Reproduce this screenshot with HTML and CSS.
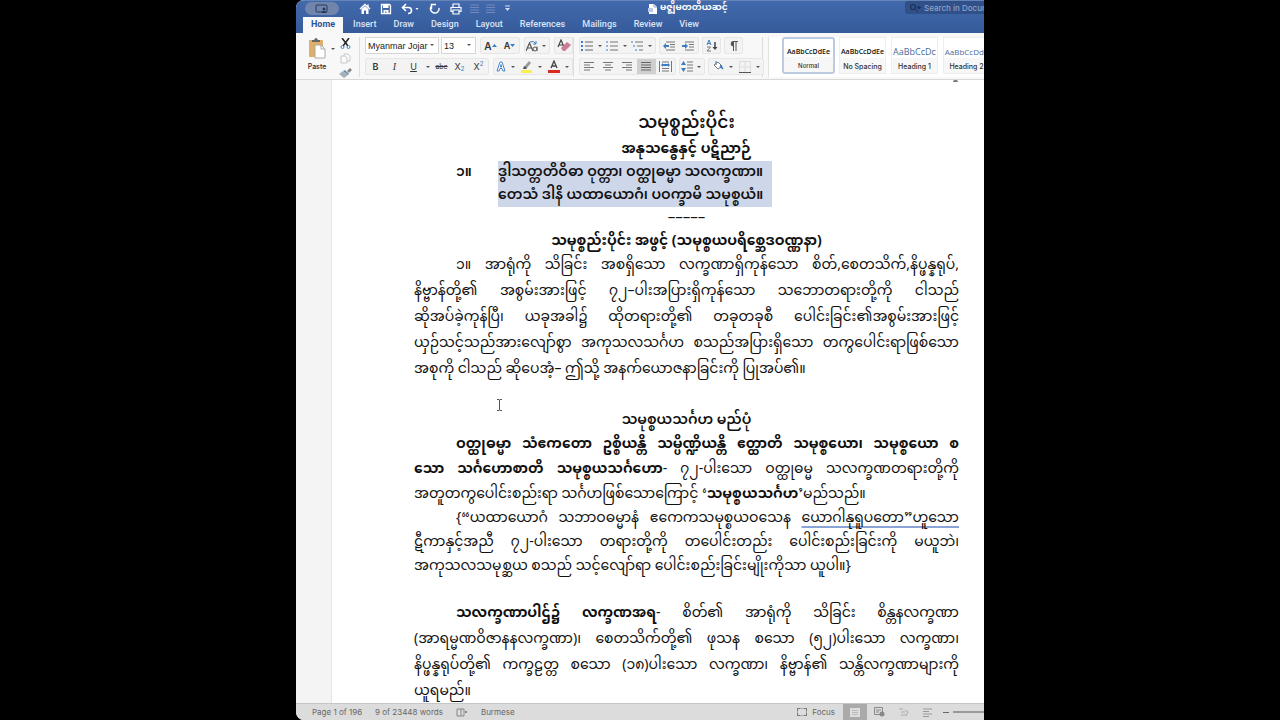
FILE: index.html
```html
<!DOCTYPE html>
<html lang="my">
<head>
<meta charset="utf-8">
<title>မဇ္ဈိမတတိယဆင့်</title>
<link rel="stylesheet" href="styles.css">
</head>
<body>
<div class="window">
  <header class="titlebar" lang="en">
    <div class="quick">
      <button class="pill" aria-label="Presenter"><svg width="14" height="10" viewBox="0 0 14 10"><rect x="1" y="1" width="11" height="7" rx="1" fill="none" stroke="#26375a"/><circle cx="9" cy="5" r="1.5" fill="#26375a"/><path d="M6 9q3-4 6 0z" fill="#26375a"/></svg></button>
      <button class="q" aria-label="Home"><svg width="12" height="12" viewBox="0 0 12 12"><path d="M1 6 6 1.500 11 6M9 1.500V4" fill="none" stroke="#fff" stroke-width="1.400"/><path d="M2.500 6 6 3l3.500 3v5H7V7.500H5V11H2.500z" fill="#fff"/></svg></button>
      <button class="q" aria-label="Save"><svg width="12" height="12" viewBox="0 0 12 12"><path d="M1.500 1.500h8l1 1v8h-9z" fill="none" stroke="#fff" stroke-width="1.300"/><path d="M3 2h5.500v3H3zM3.500 7h5v4H6.500V8.500H5V11H3.500z" fill="#fff"/></svg></button>
      <button class="q undo" aria-label="Undo"><svg width="18" height="12" viewBox="0 0 18 12"><path d="M5 1 1.500 4.500 5 8M2 4.500h5.500q3 0 3 3T7 10.500" fill="none" stroke="#fff" stroke-width="1.600"/><path d="M14.500 5h3L16 7z" fill="#fff"/></svg></button>
      <button class="q" aria-label="Redo"><svg width="12" height="12" viewBox="0 0 12 12"><path d="M9.500 3A4.300 4.300 0 1 1 2 5M5 1.500h4.500V6" fill="none" stroke="#fff" stroke-width="1.500" transform="matrix(-1 0 0 1 12 0)"/></svg></button>
      <button class="q" aria-label="Print"><svg width="12" height="12" viewBox="0 0 12 12"><path d="M3 4.500V1h6v3.500M3 8.500H1v-4h10v4H9M3 7h6v4H3z" fill="none" stroke="#fff" stroke-width="1.200"/></svg></button>
      <button class="q small" aria-label="Outline"><svg width="9" height="10" viewBox="0 0 9 10"><path d="M0 1h9M0 3.500h9M0 6h9M0 8.500h9" stroke="#7189bb"/></svg></button>
      <button class="q small" aria-label="List"><svg width="9" height="10" viewBox="0 0 9 10"><path d="M0 1h9M0 3.500h9M0 6h9M0 8.500h9" stroke="#7189bb"/></svg></button>
      <button class="q more" aria-label="Customize"><svg width="7" height="7" viewBox="0 0 7 7"><path d="M1 1h5" stroke="#d5ddef"/><path d="M1 3h5L3.500 6z" fill="#d5ddef"/></svg></button>
    </div>
    <div class="doc-title"><svg width="9" height="10" viewBox="0 0 9 10"><path d="M1 0h5l3 3v7H1z" fill="#fff"/><path d="M6 0v3h3" fill="none" stroke="#8ba4d4"/><path d="M0 4h5v4H0z" fill="#b9caeb"/></svg><span lang="my">မဇ္ဈိမတတိယဆင့်</span></div>
    <label class="search"><svg width="12" height="10" viewBox="0 0 12 10"><circle cx="4" cy="4" r="2.500" fill="none" stroke="#1d3158" stroke-width="1.200"/><path d="m6 6 3 3M8.500 4h3L10 6z" stroke="#1d3158" fill="#1d3158"/></svg><input type="text" placeholder="Search in Document" aria-label="Search in Document"></label>
    <nav class="tabs">
      <button class="tab active">Home</button><button class="tab">Insert</button><button class="tab">Draw</button><button class="tab">Design</button><button class="tab">Layout</button><button class="tab">References</button><button class="tab">Mailings</button><button class="tab">Review</button><button class="tab">View</button>
    </nav>
  </header>

  <section class="ribbon" lang="en">
    <div class="clip">
      <button class="paste"><svg width="17" height="22" viewBox="0 0 17 22"><rect x="0" y="3" width="14" height="17" rx="1" fill="#dfae69"/><path d="M3 5V3h2q2-4 4 0h2v2z" fill="#666"/><path d="M6 8h6l4 4v9H6z" fill="#fff" stroke="#aaa"/><path d="M12 8v4h4" fill="none" stroke="#aaa"/></svg><span>Paste</span></button>
      <i class="arrow"></i>
      <div class="clip-tools">
        <button aria-label="Cut"><svg width="12" height="11" viewBox="0 0 12 11"><path d="m2 0 6 8M9 0 3 8" stroke="#222" stroke-width="1.500"/><circle cx="2.500" cy="9" r="1.500" fill="none" stroke="#4c80bb"/><circle cx="8.500" cy="9" r="1.500" fill="none" stroke="#4c80bb"/></svg></button>
        <button aria-label="Copy"><svg width="11" height="11" viewBox="0 0 11 11"><path d="M1 3h4l2 2v5H1zM4 3V1h4l2 2v5H7" fill="#fafafa" stroke="#c8c8c8"/></svg></button>
        <button aria-label="Format Painter"><svg width="13" height="10" viewBox="0 0 13 10"><path d="m8 3 3-3 2 2-3 3z" fill="#888"/><path d="m6 2 4 4-1 1-5-4z" fill="#5b8db8"/><path d="m4 3 5 4-4 3-5-4z" fill="#a8afb5"/></svg></button>
      </div>
    </div>

    <div class="tools">
      <div class="row">
        <div class="pair"><span class="combo font"><select aria-label="Font"><option>Myanmar Jojar</option></select></span><span class="combo size"><select aria-label="Font size"><option>13</option></select></span></div>
        <div class="group"><button class="b19"><b class="big">A</b><svg width="5" height="4" viewBox="0 0 5 4"><path d="M0 3 2.500 0 5 3z" fill="#3d7cc0"/></svg></button><button class="b19"><b>A</b><svg width="5" height="4" viewBox="0 0 5 4"><path d="M0 0h5L2.500 3z" fill="#3d7cc0"/></svg></button></div>
        <div class="group"><button class="b13" aria-label="Change case"><svg width="12" height="12" viewBox="0 0 12 12"><path d="M0 11 3.500 3 7 11M1 8h5" fill="none" stroke="#555" stroke-width="1.200"/><circle cx="9" cy="9" r="2" fill="none" stroke="#555"/><path d="M11 6.500V11" stroke="#555"/><path d="M4 2q4-2 6 2M10 1v3H7" fill="none" stroke="#3d7cc0"/></svg></button><i class="arrow"></i></div>
        <div class="group"><button class="b16" aria-label="Clear formatting"><svg width="14" height="13" viewBox="0 0 14 13"><path d="M1 8 4 1l3 7M2 6h4" fill="none" stroke="#444" stroke-width="1.200"/><path d="m4 9 6-6 4 3-6 6H6z" fill="#cc7d94"/></svg></button></div>
      </div>
      <div class="row">
        <div class="group"><button class="b19"><b>B</b></button><button class="b19 it">I</button><button class="b19"><u>U</u></button><i class="arrow"></i><button class="b16"><s>abc</s></button><button class="b19">X<sub>2</sub></button><button class="b19">X<sup>2</sup></button></div>
        <div class="group"><button class="b13" aria-label="Text effects"><svg width="11" height="11" viewBox="0 0 11 11"><path d="m1 10 3-9h2l3 9H7L6 7.500H4L3 10zM5 3.500 4.500 6h1.200z" fill="#fff" stroke="#4a86c8"/></svg></button><i class="arrow"></i><button class="b16" aria-label="Highlight"><svg width="12" height="13" viewBox="0 0 12 13"><path d="m3 7 5-6 2 2-5 6z" fill="#999"/><path d="m2 9 1-3 3 2-1 1z" fill="#555"/><path d="M0 10h11v3H0z" fill="#f7f14a"/></svg></button><i class="arrow"></i><button class="b16" aria-label="Font color"><svg width="12" height="13" viewBox="0 0 12 13"><path d="m3 8 3-7 3 7M4 6h4" fill="none" stroke="#444" stroke-width="1.300"/><path d="M0 10h12v3H0z" fill="#dc2a22"/></svg></button><i class="arrow"></i></div>
      </div>
    </div>

    <div class="tools para">
      <div class="row near">
        <div class="group"><button class="b15" aria-label="Bullets"><svg width="13" height="10" viewBox="0 0 13 10"><path d="M4 1h8M4 5h8M4 9h8" stroke="#666"/><path d="M0 1h2M0 5h2M0 9h2" stroke="#3d7cc0" stroke-width="2"/></svg></button><i class="arrow"></i><button class="b15" aria-label="Numbering"><svg width="13" height="10" viewBox="0 0 13 10"><path d="M4 1h8M4 5h8M4 9h8" stroke="#777"/><path d="M1 0v2M1 4v2M1 8v2" stroke="#3d7cc0"/></svg></button><i class="arrow"></i><button class="b15" aria-label="Multilevel list"><svg width="13" height="10" viewBox="0 0 13 10"><path d="M4 1h8M6 5h6M8 9h4" stroke="#777"/><path d="M0 1h2M3 4v2M5 8v2" stroke="#3d7cc0"/></svg></button><i class="arrow"></i></div>
        <div class="group"><button class="b19" aria-label="Decrease indent"><svg width="13" height="10" viewBox="0 0 13 10"><path d="M3 1h9M7 3.500h5M7 6h5M3 9h9" stroke="#777"/><path d="m0 5 3-3v2h3v2H3v2z" fill="#3d7cc0"/></svg></button><button class="b19" aria-label="Increase indent"><svg width="13" height="10" viewBox="0 0 13 10"><path d="M3 1h9M7 3.500h5M7 6h5M3 9h9" stroke="#777"/><path d="M6 5 3 2v2H0v2h3v2z" fill="#3d7cc0"/></svg></button></div>
        <div class="group"><button class="b16" aria-label="Sort"><svg width="12" height="12" viewBox="0 0 12 12"><path d="m1 5 2-5 2 5M1.500 3.500h3" fill="none" stroke="#3d7cc0"/><path d="M1 7h3.500L1 11h4" fill="none" stroke="#777"/><path d="M9 2v6" stroke="#444" stroke-width="1.500"/><path d="M6.500 7h5L9 10z" fill="#444"/></svg></button></div>
        <div class="group"><button class="b16" aria-label="Show marks"><svg width="9" height="10" viewBox="0 0 9 10"><path d="M4 .500h5M4.500 0v10M7 0v10" stroke="#555"/><path d="M4.500 0a2.700 2.700 0 0 0 0 5.500z" fill="#555"/></svg></button></div>
      </div>
      <div class="row near">
        <div class="group"><button class="b19" aria-label="Align left"><svg width="11" height="9" viewBox="0 0 11 9"><path d="M0 .500h10M0 3h6M0 5.500h10M0 8h6" stroke="#777"/></svg></button><button class="b19" aria-label="Center"><svg width="11" height="9" viewBox="0 0 11 9"><path d="M0 .500h10M2 3h6M0 5.500h10M2 8h6" stroke="#777"/></svg></button><button class="b19" aria-label="Align right"><svg width="11" height="9" viewBox="0 0 11 9"><path d="M0 .500h10M4 3h6M0 5.500h10M4 8h6" stroke="#777"/></svg></button><button class="b19 pressed" aria-label="Justify"><svg width="11" height="9" viewBox="0 0 11 9"><path d="M0 .500h10M0 3h10M0 5.500h10M0 8h10" stroke="#666"/></svg></button><button class="b19" aria-label="Distribute"><svg width="13" height="11" viewBox="0 0 13 11"><path d="M.500 0v11M12.500 0v11M3 1h7M3 10h7M3 7.500h7" stroke="#777"/><path d="m2 4 2-2v1h5V2l2 2-2 2V5H4v1z" fill="#3d7cc0"/></svg></button></div>
        <div class="group"><button class="b13" aria-label="Line spacing"><svg width="13" height="11" viewBox="0 0 13 11"><path d="M6 1h6M6 4h6M6 7h6M6 10h6" stroke="#777"/><path d="m0 4 2.500-4L5 4zM0 7h5l-2.500 4z" fill="#3d7cc0"/></svg></button><i class="arrow"></i></div>
        <div class="group"><button class="b16" aria-label="Shading"><svg width="12" height="12" viewBox="0 0 12 12"><path d="m2 4 4-3 4 4-4 3z" fill="#fff" stroke="#777"/><path d="M4 0v4M9 4l2 4-3-2z" stroke="#3d7cc0" fill="#3d7cc0"/></svg></button><i class="arrow"></i><button class="b16" aria-label="Borders"><svg width="12" height="12" viewBox="0 0 12 12"><path d="M.500 0v11M11.500 0v11M0 .500h12M6 0v11M0 6h12" stroke="#ddd" fill="none"/><path d="M0 11.500h12" stroke="#555"/></svg></button><i class="arrow"></i></div>
      </div>
    </div>

    <div class="styles">
      <button class="card selected"><span class="sample">AaBbCcDdEe</span><span class="name">Normal</span></button>
      <button class="card"><span class="sample">AaBbCcDdEe</span><span class="name">No Spacing</span></button>
      <button class="card"><span class="sample h1">AaBbCcDc</span><span class="name">Heading 1</span></button>
      <button class="card"><span class="sample h2">AaBbCcDdE</span><span class="name">Heading 2</span></button>
    </div>
  </section>

  <main class="canvas">
    <article class="page">
      <span class="fold"></span>
      <h1>သမုစ္စည်းပိုင်း</h1>
      <h2>အနုသန္ဓေနှင့် ပဋိညာဉ်</h2>
      <div class="verse">
        <span class="num">၁။</span>
        <div class="lines"><mark>ဒွါသတ္တတိဝိဓာ ဝုတ္တာ၊ ဝတ္ထုဓမ္မာ သလက္ခဏာ။</mark><mark>တေသံ ဒါနိ ယထာယောဂံ၊ ပဝက္ခာမိ သမုစ္စယံ။</mark></div>
      </div>
      <div class="dashes">–––––</div>
      <h2>သမုစ္စည်းပိုင်း အဖွင့် (သမုစ္စယပရိစ္ဆေဒဝဏ္ဏနာ)</h2>
      <p class="loose">
        <span class="ln first">၁။ အာရုံကို သိခြင်း အစရှိသော လက္ခဏာရှိကုန်သော စိတ်,စေတသိက်,နိပ္ဖန္နရုပ်,</span>
        <span class="ln">နိဗ္ဗာန်တို့၏ အစွမ်းအားဖြင့် ၇၂–ပါးအပြားရှိကုန်သော သဘောတရားတို့ကို ငါသည်</span>
        <span class="ln">ဆိုအပ်ခဲ့ကုန်ပြီ၊ ယခုအခါ၌ ထိုတရားတို့၏ တခုတခုစီ ပေါင်းခြင်း၏အစွမ်းအားဖြင့်</span>
        <span class="ln">ယှဉ်သင့်သည်အားလျော်စွာ အကုသလသင်္ဂဟ စသည်အပြားရှိသော တကွပေါင်းရာဖြစ်သော</span>
        <span class="ln last">အစုကို ငါသည် ဆိုပေအံ့– ဤသို့ အနက်ယောဇနာခြင်းကို ပြုအပ်၏။</span>
      </p>
      <h3>သမုစ္စယသင်္ဂဟ မည်ပုံ</h3>
      <p>
        <span class="ln first"><b>ဝတ္ထုဓမ္မာ သံဧကတော ဥစ္စိယန္တိ သမ္ပိဏ္ဍိယန္တိ ဧတ္ထာတိ သမုစ္စယော၊ သမုစ္စယော စ</b></span>
        <span class="ln"><b>သော သင်္ဂဟောစာတိ သမုစ္စယသင်္ဂဟော</b>- ၇၂-ပါးသော ဝတ္ထုဓမ္မ သလက္ခဏတရားတို့ကို</span>
        <span class="ln last">အတူတကွပေါင်းစည်းရာ သင်္ဂဟဖြစ်သောကြောင့် ‘<b>သမုစ္စယသင်္ဂဟ</b>’မည်သည်။</span>
      </p>
      <p class="tight">
        <span class="ln first">{“ယထာယောဂံ သဘာဝဓမ္မာနံ ဧကေကသမုစ္စယဝသေန <span class="gram">ယောဂါနုရူပတော”ဟူသော</span></span>
        <span class="ln">ဋီကာနှင့်အညီ ၇၂-ပါးသော တရားတို့ကို တပေါင်းတည်း ပေါင်းစည်းခြင်းကို မယူဘဲ၊</span>
        <span class="ln last">အကုသလသမုစ္ဆယ စသည် သင့်လျော်ရာ ပေါင်းစည်းခြင်းမျိုးကိုသာ ယူပါ။}</span>
      </p>
      <p class="loose">
        <span class="ln first"><b>သလက္ခဏာပါဌ်၌ လက္ခဏအရ</b>- စိတ်၏ အာရုံကို သိခြင်း စိန္တနလက္ခဏာ</span>
        <span class="ln">(အာရမ္မဏဝိဇာနနလက္ခဏာ)၊ စေတသိက်တို့၏ ဖုသန စသော (၅၂)ပါးသော လက္ခဏာ၊</span>
        <span class="ln">နိပ္ဖန္နရုပ်တို့၏ ကက္ခဠတ္တ စသော (၁၈)ပါးသော လက္ခဏာ၊ နိဗ္ဗာန်၏ သန္တိလက္ခဏာများကို</span>
        <span class="ln last">ယူရမည်။</span>
      </p>
      <svg class="ibeam" width="7" height="12" viewBox="0 0 7 12"><path d="M1 .500h2l.500 1 .500-1h2M3.500 1v10M1 11.500h2l.500-1 .500 1h2" fill="none" stroke="#555"/></svg>
    </article>
  </main>

  <footer class="status" lang="en">
    <span>Page 1 of 196</span><span>9 of 23448 words</span>
    <svg width="12" height="9" viewBox="0 0 12 9"><path d="M1 1h4v7H1zM5 1h3v7H5M9 3l2 2M11 3 9 5" fill="none" stroke="#888"/></svg>
    <span>Burmese</span>
    <div class="views">
      <button class="focus"><svg width="10" height="8" viewBox="0 0 10 8"><path d="M.500.500h9v7h-9z" fill="none" stroke="#aaa"/><path d="M.500 3V.500H3M7 .500h2.500V3M9.500 5v2.500H7M3 7.500H.500V5" fill="none" stroke="#777"/></svg>Focus</button>
      <button class="view on" aria-label="Print layout"><svg width="10" height="9" viewBox="0 0 10 9"><path d="M0 0h10v9H0z" fill="#ddd"/><path d="M2 2.500h6M2 4.500h6M2 6.500h6" stroke="#bbb"/></svg></button>
      <button class="view" aria-label="Web layout"><svg width="11" height="10" viewBox="0 0 11 10"><path d="M.500.500h8v7h-8zM2 3h5M2 5h3" fill="none" stroke="#888"/><circle cx="8" cy="7" r="2.500" fill="#888"/></svg></button>
      <button class="view" aria-label="Outline"><svg width="11" height="9" viewBox="0 0 11 9"><path d="M1 1h4M3 4h4M3 7h5M7 2l3 2-2 4" fill="none" stroke="#aaa"/></svg></button>
      <button class="view" aria-label="Draft"><svg width="9" height="9" viewBox="0 0 9 9"><path d="M0 1h9M0 3.500h6M0 6h9M0 8.500h6" stroke="#999"/></svg></button>
      <span class="minus"></span><span class="track"></span>
    </div>
  </footer>
</div>
</body>
</html>
```
FILE: styles.css
```css
* { box-sizing: border-box; }
body { margin: 0; background: #000; font-family: Inter, "Liberation Sans", sans-serif; }
button, input, select { font: inherit; color: inherit; border: 0; padding: 0; background: none; }
button { display: flex; align-items: center; justify-content: center; flex: none; }
svg { flex: none; display: block; }

.window { display: flex; flex-direction: column; height: 100vh; margin: 0 23.125%; overflow: hidden; border-radius: 8px 0 0 8px; background: #fff; }

.titlebar { display: grid; grid-template-columns: 352px 1fr 79px; flex: none; background: linear-gradient(#4169ab, #365b9b); color: #fff; border-top: 1px solid #6484b8; }
.quick { display: flex; align-items: center; height: 15px; padding-left: 9px; }
.pill { width: 34px; height: 13px; margin-right: 15px; border-radius: 7px; background: #7185ac; }
.q { width: 21px; }
.q.undo { width: 28px; }
.q.small { width: 16px; }
.q.more { width: 18px; }
.doc-title { display: flex; align-items: center; gap: 3px; font: 700 9px/15px "Noto Sans Myanmar", "Noto Sans", sans-serif; white-space: nowrap; height: 15px; }
.search { display: flex; align-items: center; gap: 3px; height: 13px; padding-left: 4px; border-radius: 3px 0 0 3px; background: #2f5088; font-size: 8px; font-weight: 500; overflow: hidden; }
.search input { flex: 1; min-width: 80px; }
.search input::placeholder { color: #8fa3c9; opacity: 1; }
.tabs { grid-column: 1 / -1; display: flex; gap: 1px; padding: 1px 7px 0; height: 17px; font: 500 9px Roboto, "Liberation Sans", sans-serif; }
.tab { padding: 0 8px 2px; color: #dbe4f4; }
.tab.active { background: #f8f8f8; color: #2f5597; font-weight: 700; margin-right: 1px; }

.ribbon { display: flex; flex: none; height: 47px; padding-top: 4px; background: #f8f8f8; border-bottom: 1px solid #d8d8d8; color: #333; overflow: hidden; }
.clip { display: flex; flex: none; width: 64px; padding-left: 9px; border-right: 1px solid #ddd; height: 40px; }
.paste { flex-direction: column; justify-content: flex-start; gap: 3px; width: 24px; font-size: 7px; font-weight: 500; color: #222; }
.arrow { flex: none; width: 10px; align-self: center; display: flex; justify-content: center; }
.arrow::after, .combo::after { content: ""; border: 2px solid transparent; border-top-color: #555; border-bottom: 0; }
.clip .arrow { width: 8px; margin-bottom: 16px; }
.clip-tools { display: flex; flex-direction: column; gap: 3px; padding: 0 2px; }
.clip-tools button { height: 12px; }
.tools { display: flex; flex: none; flex-direction: column; gap: 4px; width: 214px; padding-left: 5px; border-right: 1px solid #ddd; height: 40px; font-size: 9px; }
.tools.para { width: 189px; }
.row { display: flex; gap: 4px; height: 17px; }
.row.near { gap: 3px; }
.pair { display: flex; gap: 2px; }
.combo { position: relative; display: flex; flex: none; background: #fff; border: 1px solid #d6d6d6; }
.combo::after { position: absolute; right: 4px; top: 6px; }
.combo select { appearance: none; width: 100%; padding-left: 2px; font: 9px "Liberation Sans", sans-serif; color: #222; }
.font { width: 74px; }
.size { width: 35px; }
.group { display: flex; flex: none; background: #f3f3f3; border: 1px solid #e6e6e6; border-radius: 2px; }
.group b { font-weight: 600; }
.group .big { font-size: 10px; }
.b13 { width: 14px; } .b15 { width: 15px; } .b16 { width: 17px; } .b19 { width: 19px; }
.it { font: italic 10px "Liberation Serif", serif; }
.group s { font-size: 7px; }
.group sub, .group sup { font-size: 6px; color: #3d7cc0; line-height: 6px; }
.group sub { padding-top: 5px; } .group sup { padding-bottom: 5px; }
.pressed { background: #cfcfcf; }
.styles { display: flex; flex: 1; min-width: 0; gap: 5px; margin-left: 5px; padding-left: 13px; background: #fff; overflow: hidden; border-left: 1px solid #e2e2e2; height: 40px; }
.card { flex-direction: column; width: 47px; height: 37px; border: 1px solid #eee; overflow: hidden; }
.card.selected { width: 53px; border: 2px solid #bccbe0; border-radius: 3px; margin-right: -1px; }
.sample { display: flex; align-items: center; height: 20px; font: 600 7px "Open Sans", sans-serif; color: #111; padding-top: 6px; }
.sample.h1 { font-size: 9px; font-weight: 400; color: #4a6b9d; }
.sample.h2 { font-size: 8px; font-weight: 400; color: #4a6b9d; }
.name { width: 100%; padding-top: 3px; line-height: 12px; font-size: 7px; font-weight: 500; background: #f7f7f7; white-space: nowrap; }
.selected .name { font-size: 6px; }

.canvas { flex: 1; min-height: 0; padding-left: 35px; background: #f4f4f4; overflow: hidden; }
.page { position: relative; min-height: 100%; padding: 31px 25px 0 82px; background: #fff; border-left: 1px solid #e4e4e4; color: #111; font: 14px/25px "Noto Sans Myanmar", "Noto Sans", sans-serif; white-space: nowrap; }
.fold { position: absolute; top: 0; right: 26px; width: 5px; height: 2px; background: #777; border-radius: 3px 3px 0 0; }
h1, h2, h3, p { margin: 0; }
h1 { font-size: 17px; line-height: 27px; font-weight: 600; text-align: center; }
h2 { font-size: 14px; line-height: 23px; font-weight: 700; text-align: center; }
h3 { font-size: 14px; line-height: 23px; font-weight: 600; text-align: center; }
.verse { display: flex; padding-left: 42px; line-height: 23px; font-weight: 600; }
.num { width: 42px; }
.lines { display: flex; flex-direction: column; align-items: flex-start; }
mark { background: #ced7ea; color: inherit; padding-right: 9px; height: 23px; }
.dashes { text-align: center; line-height: 23px; font-size: 15px; }
.ln { display: block; text-align: justify; text-align-last: justify; }
.ln.first { padding-left: 42px; }
.ln.last { text-align-last: left; }
.loose { line-height: 26px; }
.loose + h3 { margin-top: 26px; }
.tight { line-height: 24px; padding-bottom: 22px; }
.gram { text-decoration: underline 2px #8ba4d8; text-underline-offset: 4px; text-decoration-skip-ink: none; }
.ibeam { position: absolute; left: 164px; top: 319px; }

.status { display: flex; flex: none; align-items: center; gap: 13px; height: 17px; padding-left: 16px; background: #dcdcdc; border-top: 1px solid #c6c6c6; color: #666; font-size: 8px; white-space: nowrap; overflow: hidden; }
.views { display: flex; align-items: center; margin-left: auto; height: 100%; }
.focus { gap: 5px; margin-right: 8px; }
.view { width: 24px; height: 100%; }
.view.on { background: #aaa; }
.minus { width: 6px; height: 1px; background: #666; margin: 0 4px 0 4px; }
.track { width: 31px; height: 2px; background: #999; }
```
